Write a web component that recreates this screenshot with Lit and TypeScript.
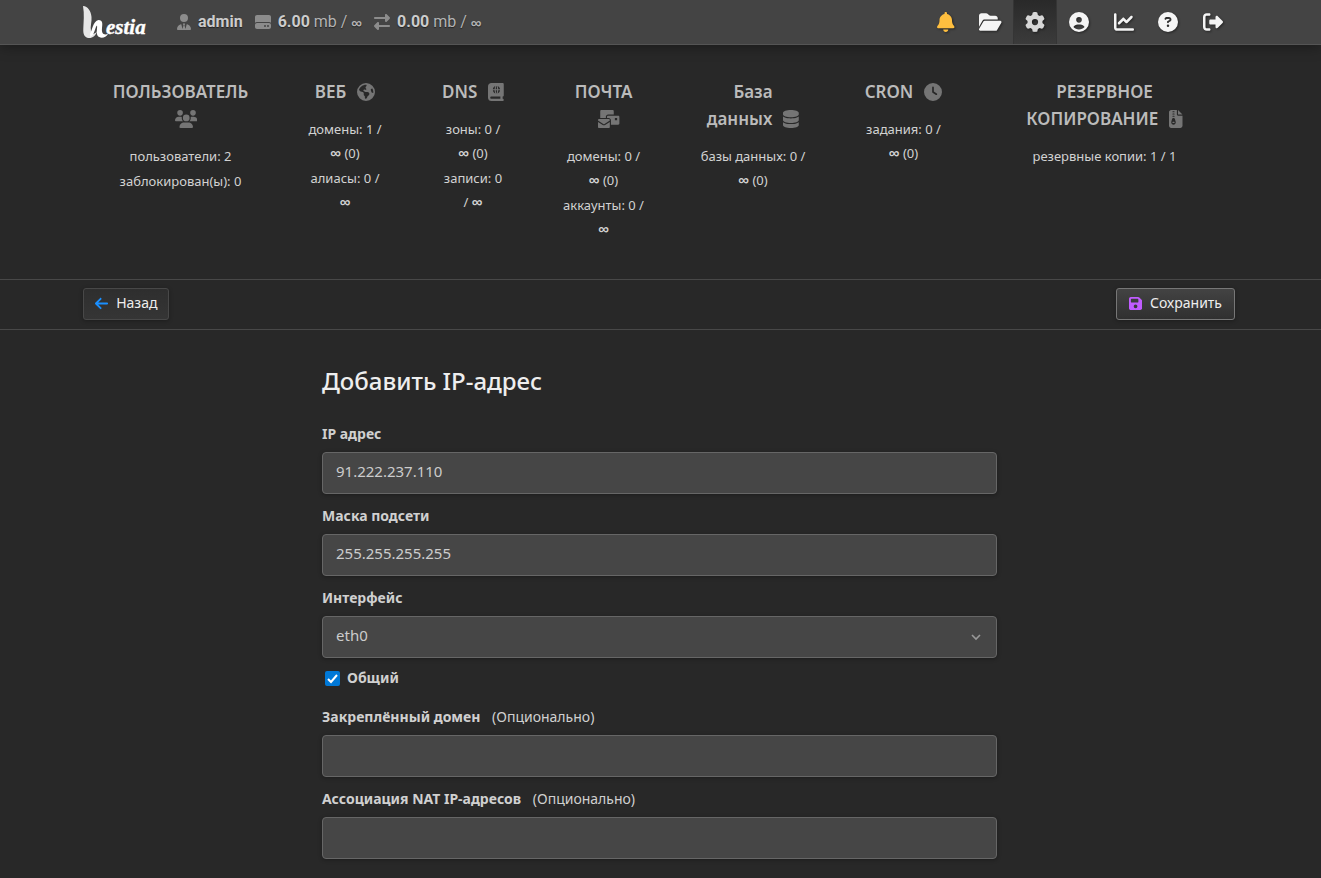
import { LitElement, html, svg, css } from "lit";
import { customElement, property } from "lit/decorators.js";
import { classMap } from "lit/directives/class-map.js";

type Icon = { w: number; d: string };

const ICONS: Record<string, Icon> = {
  bell: { w: 448, d: "M224 0c-17.7 0-32 14.3-32 32l0 19.2C119 66 64 130.6 64 208l0 18.8c0 47-17.3 92.4-48.5 127.6l-7.4 8.3c-8.4 9.4-10.4 22.9-5.3 34.4S19.4 416 32 416l384 0c12.6 0 24-7.4 29.2-18.9s3.1-25-5.3-34.4l-7.4-8.3C401.3 319.2 384 273.9 384 226.8l0-18.8c0-77.4-55-142-128-156.8L256 32c0-17.7-14.3-32-32-32zm45.3 493.3c12-12 18.7-28.3 18.7-45.3l-64 0-64 0c0 17 6.7 33.3 18.7 45.3s28.3 18.7 45.3 18.7s33.3-6.7 45.3-18.7z" },
  folder: { w: 576, d: "M88.7 223.8L0 375.8 0 96C0 60.7 28.7 32 64 32l117.5 0c17 0 33.3 6.7 45.3 18.7l26.5 26.5c12 12 28.3 18.7 45.3 18.7L416 96c35.3 0 64 28.7 64 64l0 32-336 0c-22.8 0-43.8 12.1-55.3 31.8zm27.6 16.1C122.1 230 132.6 224 144 224l400 0c11.5 0 22 6.1 27.7 16.1s5.7 22.2-.1 32.1l-112 192C453.9 474 443.4 480 432 480L32 480c-11.5 0-22-6.1-27.7-16.1s-5.7-22.2 .1-32.1l112-192z" },
  gear: { w: 512, d: "M495.9 166.6c3.2 8.7 .5 18.4-6.4 24.6l-43.3 39.4c1.1 8.3 1.7 16.8 1.7 25.4s-.6 17.1-1.7 25.4l43.3 39.4c6.9 6.2 9.6 15.9 6.4 24.6c-4.4 11.9-9.7 23.3-15.8 34.3l-4.7 8.1c-6.6 11-14 21.4-22.1 31.2c-5.9 7.2-15.7 9.6-24.5 6.8l-55.7-17.7c-13.4 10.3-28.2 18.9-44 25.4l-12.5 57.1c-2 9.1-9 16.3-18.2 17.8c-13.8 2.3-28 3.5-42.5 3.5s-28.7-1.2-42.5-3.5c-9.2-1.5-16.2-8.7-18.2-17.8l-12.5-57.1c-15.8-6.5-30.6-15.1-44-25.4L83.1 425.9c-8.8 2.8-18.6 .3-24.5-6.8c-8.1-9.8-15.5-20.2-22.1-31.2l-4.7-8.1c-6.1-11-11.4-22.4-15.8-34.3c-3.2-8.7-.5-18.4 6.4-24.6l43.3-39.4C64.6 273.1 64 264.6 64 256s.6-17.1 1.7-25.4L22.4 191.2c-6.9-6.2-9.6-15.9-6.4-24.6c4.4-11.9 9.7-23.3 15.8-34.3l4.7-8.1c6.6-11 14-21.4 22.1-31.2c5.9-7.2 15.7-9.6 24.5-6.8l55.7 17.7c13.4-10.3 28.2-18.9 44-25.4l12.5-57.1c2-9.1 9-16.3 18.2-17.8C227.3 1.2 241.5 0 256 0s28.7 1.2 42.5 3.5c9.2 1.5 16.2 8.7 18.2 17.8l12.5 57.1c15.8 6.5 30.6 15.1 44 25.4l55.7-17.7c8.8-2.8 18.6-.3 24.5 6.8c8.1 9.8 15.5 20.2 22.1 31.2l4.7 8.1c6.1 11 11.4 22.4 15.8 34.3zM256 336a80 80 0 1 0 0-160 80 80 0 1 0 0 160z" },
  user: { w: 512, d: "M399 384.2C376.9 345.8 335.4 320 288 320l-64 0c-47.4 0-88.9 25.8-111 64.2c35.2 39.2 86.2 63.8 143 63.8s107.8-24.7 143-63.8zM0 256a256 256 0 1 1 512 0A256 256 0 1 1 0 256zm256 16a72 72 0 1 0 0-144 72 72 0 1 0 0 144z" },
  chart: { w: 512, d: "M64 64c0-17.7-14.3-32-32-32S0 46.3 0 64L0 400c0 44.2 35.8 80 80 80l400 0c17.7 0 32-14.3 32-32s-14.3-32-32-32L80 416c-8.8 0-16-7.2-16-16L64 64zm406.6 86.6c12.5-12.5 12.5-32.8 0-45.3s-32.8-12.5-45.3 0L320 210.7l-57.4-57.4c-12.5-12.5-32.8-12.5-45.3 0l-112 112c-12.5 12.5-12.5 32.8 0 45.3s32.8 12.5 45.3 0L240 221.3l57.4 57.4c12.5 12.5 32.8 12.5 45.3 0l128-128z" },
  help: { w: 512, d: "M256 512A256 256 0 1 0 256 0a256 256 0 1 0 0 512zM169.8 165.3c7.9-22.3 29.1-37.3 52.8-37.3l58.3 0c34.9 0 63.1 28.3 63.1 63.1c0 22.6-12.1 43.5-31.7 54.8L280 264.4c-.2 13-10.9 23.6-24 23.6c-13.3 0-24-10.7-24-24l0-13.5c0-8.6 4.6-16.5 12.1-20.8l44.3-25.4c4.7-2.7 7.6-7.7 7.6-13.1c0-8.4-6.8-15.1-15.1-15.1l-58.3 0c-3.4 0-6.4 2.1-7.5 5.3l-.4 1.2c-4.4 12.5-18.2 19-30.7 14.6s-19-18.2-14.6-30.7l.4-1.2zM224 352a32 32 0 1 1 64 0 32 32 0 1 1 -64 0z" },
  logout: { w: 512, d: "M377.9 105.9L500.7 228.7c7.2 7.2 11.3 17.1 11.3 27.3s-4.1 20.1-11.3 27.3L377.9 406.1c-6.4 6.4-15 9.9-24 9.9c-18.7 0-33.9-15.2-33.9-33.9l0-62.1-128 0c-17.7 0-32-14.3-32-32l0-64c0-17.7 14.3-32 32-32l128 0 0-62.1c0-18.7 15.2-33.9 33.9-33.9c9 0 17.6 3.6 24 9.9zM160 96L96 96c-17.7 0-32 14.3-32 32l0 256c0 17.7 14.3 32 32 32l64 0c17.7 0 32 14.3 32 32s-14.3 32-32 32l-64 0c-53 0-96-43-96-96L0 128C0 75 43 32 96 32l64 0c17.7 0 32 14.3 32 32s-14.3 32-32 32z" },
  tie: { w: 448, d: "M96 128a128 128 0 1 0 256 0A128 128 0 1 0 96 128zm94.5 200.2l18.6 31L175.8 483.1l-36-146.9c-2-8.1-9.8-13.4-17.9-11.3C51.9 342.4 0 405.8 0 481.3c0 17 13.8 30.7 30.7 30.7l131.7 0c0 0 0 0 .1 0l5.5 0 112 0 5.5 0c0 0 0 0 .1 0l131.7 0c17 0 30.7-13.8 30.7-30.7c0-75.5-51.9-138.9-121.9-156.4c-8.1-2-15.9 3.3-17.9 11.3l-36 146.9L238.9 359.2l18.6-31c6.4-10.7-1.3-24.2-13.7-24.2L224 304l-19.7 0c-12.4 0-20.1 13.6-13.7 24.2z" },
  disk: { w: 512, d: "M0 96C0 60.7 28.7 32 64 32l384 0c35.3 0 64 28.7 64 64l0 184.4c-17-15.2-39.4-24.4-64-24.4L64 256c-24.6 0-47 9.2-64 24.4L0 96zM64 288l384 0c35.3 0 64 28.7 64 64l0 64c0 35.3-28.7 64-64 64L64 480c-35.3 0-64-28.7-64-64l0-64c0-35.3 28.7-64 64-64zM320 416a32 32 0 1 0 0-64 32 32 0 1 0 0 64zm128-32a32 32 0 1 0 -64 0 32 32 0 1 0 64 0z" },
  transfer: { w: 512, d: "M32 96l320 0 0-64c0-12.9 7.8-24.6 19.8-29.6s25.7-2.2 34.9 6.9l96 96c6 6 9.4 14.1 9.4 22.6s-3.4 16.6-9.4 22.6l-96 96c-9.2 9.2-22.9 11.9-34.9 6.9s-19.8-16.6-19.8-29.6l0-64L32 160c-17.7 0-32-14.3-32-32s14.3-32 32-32zM480 352c17.7 0 32 14.3 32 32s-14.3 32-32 32l-320 0 0 64c0 12.9-7.8 24.6-19.8 29.6s-25.7 2.2-34.9-6.9l-96-96c-6-6-9.4-14.1-9.4-22.6s3.4-16.6 9.4-22.6l96-96c9.2-9.2 22.9-11.9 34.9-6.9s19.8 16.6 19.8 29.6l0 64 320 0z" },
  users: { w: 640, d: "M144 0a80 80 0 1 1 0 160A80 80 0 1 1 144 0zM512 0a80 80 0 1 1 0 160A80 80 0 1 1 512 0zM0 298.7C0 239.8 47.8 192 106.7 192l42.7 0c15.9 0 31 3.5 44.6 9.7c-1.3 7.2-1.9 14.7-1.9 22.3c0 38.2 16.8 72.5 43.3 96c-.2 0-.4 0-.7 0L21.3 320C9.6 320 0 310.4 0 298.7zM405.3 320c-.2 0-.4 0-.7 0c26.6-23.5 43.3-57.8 43.3-96c0-7.6-.7-15-1.9-22.3c13.6-6.3 28.7-9.7 44.6-9.7l42.7 0C592.2 192 640 239.8 640 298.7c0 11.8-9.6 21.3-21.3 21.3l-213.3 0zM224 224a96 96 0 1 1 192 0 96 96 0 1 1 -192 0zM128 485.3C128 411.7 187.7 352 261.3 352l117.3 0C452.3 352 512 411.7 512 485.3c0 14.7-11.9 26.7-26.7 26.7l-330.7 0c-14.7 0-26.7-11.9-26.7-26.7z" },
  earth: { w: 512, d: "M57.7 193l9.4 16.4c8.3 14.5 21.9 25.2 38 29.8L163 255.7c17.2 4.9 29 20.6 29 38.5l0 39.9c0 11 6.2 21 16 25.9s16 14.9 16 25.9l0 39c0 15.6 14.9 26.9 29.9 22.6c16.1-4.6 28.6-17.5 32.7-33.8l2.8-11.2c4.2-16.9 15.2-31.4 30.3-40l8.1-4.6c15-8.5 24.2-24.5 24.2-41.7l0-8.3c0-12.7-5.1-24.9-14.1-33.9l-3.9-3.9c-9-9-21.2-14.1-33.9-14.1L257 256c-11.1 0-22.1-2.9-31.8-8.4l-34.5-19.7c-4.3-2.5-7.6-6.5-9.2-11.2c-3.2-9.6 1.1-20 10.2-24.5l5.9-3c6.6-3.3 14.3-3.9 21.3-1.5l23.2 7.7c8.2 2.7 17.2-.4 21.9-7.5c4.7-7 4.2-16.3-1.2-22.8l-13.6-16.3c-10-12-9.9-29.5 .3-41.3l15.7-18.3c8.8-10.3 10.2-25 3.5-36.7l-2.4-4.2c-3.5-.2-6.9-.3-10.4-.3C163.1 48 84.4 108.9 57.7 193zM464 256c0-36.8-9.6-71.4-26.4-101.5L412 164.8c-15.7 6.3-23.8 23.8-18.5 39.8l16.9 50.7c3.5 10.4 12 18.3 22.6 20.9l29.1 7.3c1.2-9 1.8-18.2 1.8-27.5zM0 256a256 256 0 1 1 512 0A256 256 0 1 1 0 256z" },
  atlas: { w: 448, d: "M0 96C0 43 43 0 96 0L384 0l32 0c17.7 0 32 14.3 32 32l0 320c0 17.7-14.3 32-32 32l0 64c17.7 0 32 14.3 32 32s-14.3 32-32 32l-32 0L96 512c-53 0-96-43-96-96L0 96zM64 416c0 17.7 14.3 32 32 32l256 0 0-64L96 384c-17.7 0-32 14.3-32 32zM138 176C144 132 172 98 208 86C196 110 190 142 189 176zM221 176C222 130 232 84 240 84C248 84 258 130 259 176zM291 176C290 142 284 110 272 86C308 98 336 132 342 176zM138 208L189 208C190 242 196 274 208 298C172 286 144 252 138 208zM221 208L259 208C258 254 248 300 240 300C232 300 222 254 221 208zM291 208L342 208C336 252 308 286 272 298C284 274 290 242 291 208z" },
  mail: { w: 608, d: "M96 0H416c18 0 32 14 32 32V128H288c-35 0-64 29-64 64V224H64V32C64 14 78 0 96 0zM288 160H576c18 0 32 14 32 32V384c0 18-14 32-32 32H368V288c0-35-29-64-64-64H256V192c0-18 14-32 32-32zM480 224V288H544V224zM32 256H304c18 0 32 14 32 32V300L185 400c-10 7-24 7-34 0L0 300V288c0-18 14-32 32-32zM0 338L134 427c20 13 48 13 68 0L336 338V480c0 18-14 32-32 32H32c-18 0-32-14-32-32z" },
  database: { w: 448, d: "M448 80l0 48c0 44.2-100.3 80-224 80S0 172.2 0 128L0 80C0 35.8 100.3 0 224 0S448 35.8 448 80zM393.2 214.7c20.8-7.4 39.9-16.9 54.8-28.6L448 288c0 44.2-100.3 80-224 80S0 332.2 0 288L0 186.1c14.9 11.8 34 21.2 54.8 28.6C99.7 230.7 159.5 240 224 240s124.3-9.3 169.2-25.3zM0 346.1c14.9 11.8 34 21.2 54.8 28.6C99.7 390.7 159.5 400 224 400s124.3-9.3 169.2-25.3c20.8-7.4 39.9-16.9 54.8-28.6l0 85.9c0 44.2-100.3 80-224 80S0 476.2 0 432l0-85.9z" },
  clock: { w: 512, d: "M256 0a256 256 0 1 1 0 512A256 256 0 1 1 256 0zM232 120l0 136c0 8 4 15.5 10.7 20l96 64c11 7.4 25.9 4.4 33.3-6.7s4.4-25.9-6.7-33.3L280 243.2 280 120c0-13.3-10.7-24-24-24s-24 10.7-24 24z" },
  zip: { w: 384, d: "M64 0C28.7 0 0 28.7 0 64L0 448c0 35.3 28.7 64 64 64l256 0c35.3 0 64-28.7 64-64l0-288-128 0c-17.7 0-32-14.3-32-32L224 0 64 0zM256 0l0 128 128 0L256 0zM96 48c0-8.8 7.2-16 16-16l32 0c8.8 0 16 7.2 16 16s-7.2 16-16 16l-32 0c-8.8 0-16-7.2-16-16zm0 64c0-8.8 7.2-16 16-16l32 0c8.8 0 16 7.2 16 16s-7.2 16-16 16l-32 0c-8.8 0-16-7.2-16-16zm0 64c0-8.8 7.2-16 16-16l32 0c8.8 0 16 7.2 16 16s-7.2 16-16 16l-32 0c-8.8 0-16-7.2-16-16zm-6.3 71.8c3.7-14 16.4-23.8 30.9-23.8l14.8 0c14.5 0 27.2 9.7 30.9 23.8l23.5 88.2c1.4 5.4 2.1 10.9 2.1 16.4c0 35.2-28.8 63.7-64 63.7s-64-28.5-64-63.7c0-5.5 .7-11.1 2.1-16.4l23.5-88.2zM112 336c-8.8 0-16 7.2-16 16s7.2 16 16 16l32 0c8.8 0 16-7.2 16-16s-7.2-16-16-16l-32 0z" },
  back: { w: 448, d: "M9.4 233.4c-12.5 12.5-12.5 32.8 0 45.3l160 160c12.5 12.5 32.8 12.5 45.3 0s12.5-32.8 0-45.3L109.2 288 416 288c17.7 0 32-14.3 32-32s-14.3-32-32-32l-306.7 0L214.6 118.6c12.5-12.5 12.5-32.8 0-45.3s-32.8-12.5-45.3 0l-160 160z" },
  save: { w: 448, d: "M64 32C28.7 32 0 60.7 0 96L0 416c0 35.3 28.7 64 64 64l320 0c35.3 0 64-28.7 64-64l0-242.7c0-17-6.7-33.3-18.7-45.3L352 50.7C340 38.7 323.7 32 306.7 32L64 32zm0 96c0-17.7 14.3-32 32-32l192 0c17.7 0 32 14.3 32 32l0 64c0 17.7-14.3 32-32 32L96 224c-17.7 0-32-14.3-32-32l0-64zM224 288a64 64 0 1 1 0 128 64 64 0 1 1 0-128z" },
};

@customElement("hs-icon")
class HsIcon extends LitElement {
  @property() name = "gear";
  static styles = css`
    :host { display: inline-flex; height: 16px; }
    svg { height: 100%; width: auto; fill: currentColor; display: block; }
  `;
  render() {
    const icon = ICONS[this.name];
    return html`<svg viewBox="0 0 ${icon.w} 512" aria-hidden="true">${svg`<path fill-rule="evenodd" d=${icon.d}></path>`}</svg>`;
  }
}

const NAV = [
  { icon: "bell", label: "Уведомления", cls: "bell" },
  { icon: "folder", label: "Файлы", cls: "" },
  { icon: "gear", label: "Настройки сервера", cls: "active" },
  { icon: "user", label: "Профиль", cls: "" },
  { icon: "chart", label: "Статистика", cls: "" },
  { icon: "help", label: "Помощь", cls: "" },
  { icon: "logout", label: "Выход", cls: "" },
];

// Each inner array is one item; its strings are the lines of that item.
const STATS = [
  { title: ["ПОЛЬЗОВАТЕЛЬ", ""], icon: "users", items: [["пользователи: 2"], ["заблокирован(ы): 0"]] },
  { title: ["ВЕБ"], icon: "earth", items: [["домены: 1 /", "∞ (0)"], ["алиасы: 0 /", "∞"]] },
  { title: ["DNS"], icon: "atlas", items: [["зоны: 0 /", "∞ (0)"], ["записи: 0", "/ ∞"]] },
  { title: ["ПОЧТА", ""], icon: "mail", items: [["домены: 0 /", "∞ (0)"], ["аккаунты: 0 /", "∞"]] },
  { title: ["База", "данных"], icon: "database", items: [["базы данных: 0 /", "∞ (0)"]] },
  { title: ["CRON"], icon: "clock", items: [["задания: 0 /", "∞ (0)"]] },
  { title: ["РЕЗЕРВНОЕ", "КОПИРОВАНИЕ"], icon: "zip", items: [["резервные копии: 1 / 1"]] },
];

// Sets the infinity sign in its own heavier style.
const rich = (text: string) => text.split(/(∞)/).map((part) => (part === "∞" ? html`<i class="inf">∞</i>` : part));

@customElement("app-root")
class AppRoot extends LitElement {
  static styles = css`
    :host {
      display: block;
      box-sizing: border-box;
      min-height: 100vh;
      background: #282828;
      color: #d0d0d0;
      font: 14px/24px "Noto Sans", "Open Sans", sans-serif;
    }
    * { box-sizing: border-box; }
    .top, .stats-wrap, .toolbar { padding-right: 3px; }
    main { padding-right: 2px; }
    .container { max-width: 1152px; margin: 0 auto; display: flex; justify-content: space-between; align-items: center; }

    .top { background: #444; border-bottom: 1px solid #555; box-shadow: 0 2px 12px rgba(0, 0, 0, 0.35); position: relative; }
    .bar { height: 44px; }
    .brand { display: flex; align-items: center; }
    .logo { display: block; width: 64px; height: 44px; margin-right: 30px; }
    .logo text { font: italic 700 21px "Liberation Serif", serif; fill: #fff; stroke: #fff; stroke-width: 0.4; }
    .usage { display: flex; gap: 12px; font: 16px/24px Roboto, sans-serif; color: #b4b4b4; text-shadow: 0 1px 1px rgba(0, 0, 0, 0.5); }
    .usage span { display: flex; align-items: center; white-space: pre; }
    .usage hs-icon { color: #8c8c8c; margin-right: 7px; }
    .usage b { color: #ccc; font-weight: 700; }
    .inf { font: 700 15px/1 "Noto Sans", sans-serif; }
    .nav { display: grid; grid-template-columns: repeat(7, 1fr); width: 311px; height: 44px; }
    .nav a { display: flex; align-items: center; justify-content: center; color: #f5f5f5; padding-bottom: 1px; }
    .nav hs-icon { height: 20px; filter: drop-shadow(1px 1px 1px rgba(0, 0, 0, 0.45)); }
    .nav .bell { color: #ffbf3f; }
    .nav .active { color: #d6d6d6; background: linear-gradient(#292929, #3b3b3b); border: 1px solid #353535; border-width: 0 1px; }

    .stats { display: grid; grid-template-columns: 195fr 134fr 122fr 139fr 160fr 141fr 261fr; align-items: start; padding: 33px 0 38px; text-align: center; }
    .stats h2 { margin: 0 0 12px; font-size: 17px; line-height: 27px; font-weight: 600; color: #bbb; }
    .stats h2 span { display: flex; justify-content: center; align-items: center; height: 27px; }
    .stats hs-icon { height: 18px; margin-left: 11px; color: #757575; }
    .stats ul { list-style: none; margin: 0; padding: 0; display: grid; gap: 1px; font-size: 13px; color: #d2d2d2; }
    .stats li span { display: block; height: 24px; }

    .toolbar { border-top: 1px solid #484848; border-bottom: 1px solid #484848; }
    .tools { padding: 8px 0 9px; }
    .btn { display: flex; align-items: center; gap: 8px; height: 32px; padding: 0 11px 2px; font: 14px/20px "Noto Sans", "Open Sans", sans-serif; color: #eee; text-decoration: none; background: linear-gradient(#2e2e2e, #353535); border: 1px solid #484848; border-radius: 3px; box-shadow: 0 1px 4px rgba(0, 0, 0, 0.3); }
    .btn.primary { padding: 0 12px 2px; background: linear-gradient(#434343, #303030); border-color: #777; }
    .btn hs-icon { height: 16px; padding-top: 1px; }
    .blue { color: #1a8fff; }
    .purple { color: #c05cff; }

    .form { max-width: 675px; margin: 0 auto; padding: 33px 0 20px; }
    h1 { margin: 0 0 23px; font-size: 24px; line-height: 36px; font-weight: 500; color: #eee; }
    .field { margin-bottom: 10px; }
    .field label { display: block; margin-bottom: 6px; font-weight: 700; }
    .field .opt { font-weight: 400; margin-left: 8px; }
    .control { display: block; width: 100%; height: 42px; padding: 0 13px 5px; font: 15px/24px "Noto Sans", "Open Sans", sans-serif; color: #ccc; background: #464646; border: 1px solid #666; border-radius: 4px; box-shadow: 0 1px 4px rgba(0, 0, 0, 0.3); appearance: none; outline: none; }
    .pick { display: grid; align-items: center; }
    .pick > * { grid-area: 1 / 1; }
    .pick svg { justify-self: end; margin-right: 16px; width: 10px; height: 8px; fill: none; stroke: #999; stroke-width: 1.6; pointer-events: none; }
    .check { display: flex; align-items: center; gap: 7px; height: 20px; margin-bottom: 17px; padding-left: 3px; font-weight: 700; }
    .check input { appearance: none; margin: 0; width: 15px; height: 15px; border-radius: 2px; display: grid; background: #0078d7; }
    .check .box { display: grid; }
    .check .box > * { grid-area: 1 / 1; }
    .check svg { width: 15px; height: 15px; fill: none; stroke: #fff; stroke-width: 2; pointer-events: none; }
  `;

  render() {
    return html`
      <header class="top">
        <div class="container bar">
          <div class="brand">
            <svg class="logo" viewBox="0 0 64 44" role="img" aria-label="Hestia">
              <path fill="#e6e6e6" d="M0 6C5 6.500 8 11 8.500 17C9 22 7 26 8 31C9 34.500 12 34.500 14 31C13 36 9 38.500 5.500 38C1.500 37.500 0 34 .3 29C.5 22 1.500 14 0 6Z"></path>
              <path fill="#fff" d="M7 34C9 31 10 21 15.500 20C20 20 19.500 24 19 28C18.500 33 20 35.500 25 34C23 38 16.500 39 14.500 35.500C13 32.500 14.500 28 14 25.500C12 27 12 34 7.500 37Z"></path>
              <text x="23" y="34">estia</text>
            </svg>
            <div class="usage">
              <span><hs-icon name="tie"></hs-icon><b>admin</b></span>
              <span><hs-icon name="disk"></hs-icon><b>6.00</b> mb / ${rich("∞")}</span>
              <span><hs-icon name="transfer"></hs-icon><b>0.00</b> mb / ${rich("∞")}</span>
            </div>
          </div>
          <nav class="nav">
            ${NAV.map((n) => html`<a href="#" aria-label=${n.label} class=${classMap({ bell: n.cls === "bell", active: n.cls === "active" })}><hs-icon name=${n.icon}></hs-icon></a>`)}
          </nav>
        </div>
      </header>

      <section class="stats-wrap">
        <div class="container stats">
          ${STATS.map((s) => html`<div>
            <h2>${s.title.map((line, i) => html`<span>${line}${i === s.title.length - 1 ? html`<hs-icon name=${s.icon}></hs-icon>` : ""}</span>`)}</h2>
            <ul>${s.items.map((item) => html`<li>${item.map((line) => html`<span>${rich(line)}</span>`)}</li>`)}</ul>
          </div>`)}
        </div>
      </section>

      <div class="toolbar">
        <div class="container tools">
          <a class="btn" href="#"><hs-icon class="blue" name="back"></hs-icon>Назад</a>
          <button class="btn primary" type="submit" form="ip-form"><hs-icon class="purple" name="save"></hs-icon>Сохранить</button>
        </div>
      </div>

      <main>
        <form class="form" id="ip-form">
          <h1>Добавить IP-адрес</h1>
          <div class="field">
            <label for="ip">IP адрес</label>
            <input class="control" id="ip" type="text" value="91.222.237.110" />
          </div>
          <div class="field">
            <label for="mask">Маска подсети</label>
            <input class="control" id="mask" type="text" value="255.255.255.255" />
          </div>
          <div class="field">
            <label for="iface">Интерфейс</label>
            <div class="pick">
              <select class="control" id="iface"><option>eth0</option></select>
              <svg viewBox="0 0 10 8" aria-hidden="true"><path d="M1 2L5 6L9 2"></path></svg>
            </div>
          </div>
          <div class="check">
            <span class="box">
              <input id="shared" type="checkbox" checked />
              <svg viewBox="0 0 15 15" aria-hidden="true"><path d="M3 8L6 11L12 4"></path></svg>
            </span>
            <label for="shared">Общий</label>
          </div>
          <div class="field">
            <label for="domain">Закреплённый домен <span class="opt">(Опционально)</span></label>
            <input class="control" id="domain" type="text" />
          </div>
          <div class="field">
            <label for="nat">Ассоциация NAT IP-адресов <span class="opt">(Опционально)</span></label>
            <input class="control" id="nat" type="text" />
          </div>
        </form>
      </main>
    `;
  }
}
